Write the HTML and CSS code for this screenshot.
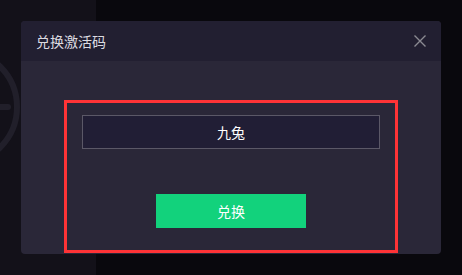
FILE: index.html
```html
<!DOCTYPE html>
<html lang="zh-CN">
<head>
  <meta charset="UTF-8" />
  <title>兑换激活码</title>
  <link rel="stylesheet" href="styles.css">
</head>
<body>
  <div class="page">
    <div class="side">
      <svg class="side-icon" width="96" height="275" viewBox="0 0 96 275">
        <circle cx="-40" cy="107" r="57" fill="none" stroke="#211f2a" stroke-width="6"/>
        <line x1="-10" y1="107" x2="8" y2="107" stroke="#211f2a" stroke-width="6" stroke-linecap="round"/>
      </svg>
    </div>
    <div class="main"></div>
  </div>

  <div class="modal">
    <div class="modal-header">
      <span class="modal-title">兑换激活码</span>
      <svg class="close" width="12" height="12" viewBox="0 0 12 12">
        <path d="M0.5 0.5 L11.5 11.5 M11.5 0.5 L0.5 11.5" stroke="#8b8a92" stroke-width="1.4"/>
      </svg>
    </div>
    <div class="modal-body">
      <div class="highlight">
        <div class="code-input">九兔</div>
        <button class="redeem-btn">兑换</button>
      </div>
    </div>
  </div>
</body>
</html>
```

FILE: styles.css
```css
body {
  margin: 0;
  padding: 0;
  font-family: "Noto Sans CJK SC", "Noto Sans", sans-serif;
  background: #09080d;
  color: #fff;
}

.page {
  display: flex;
  width: 462px;
  height: 275px;
}

.side {
  width: 96px;
  background: #131119;
}

.side-icon {
  display: block;
}

.main {
  flex: 1;
  background: #09080d;
}

.modal {
  position: absolute;
  left: 21px;
  top: 21px;
  width: 420px;
  height: 233px;
  border-radius: 4px;
  overflow: hidden;
  background: #2a2738;
  display: flex;
  flex-direction: column;
}

.modal-header {
  height: 40px;
  background: #221f31;
  display: flex;
  align-items: center;
  justify-content: space-between;
  padding: 0 15px;
}

.modal-title {
  font-size: 14px;
  color: #dcdbe0;
}

.modal-body {
  padding: 39px 43px 0;
}

.highlight {
  border: 3px solid #fe3336;
  height: 135px;
  padding: 12px 15px 0;
  display: flex;
  flex-direction: column;
  align-items: center;
}

.code-input {
  width: 296px;
  height: 32px;
  border: 1px solid #5b5867;
  background: #211e35;
  display: flex;
  align-items: center;
  justify-content: center;
  font-size: 14px;
  color: #fff;
}

.redeem-btn {
  margin-top: 45px;
  width: 150px;
  height: 34px;
  border: none;
  background: #12d27c;
  color: #fff;
  font-family: inherit;
  font-size: 14px;
  padding: 0;
}
```
